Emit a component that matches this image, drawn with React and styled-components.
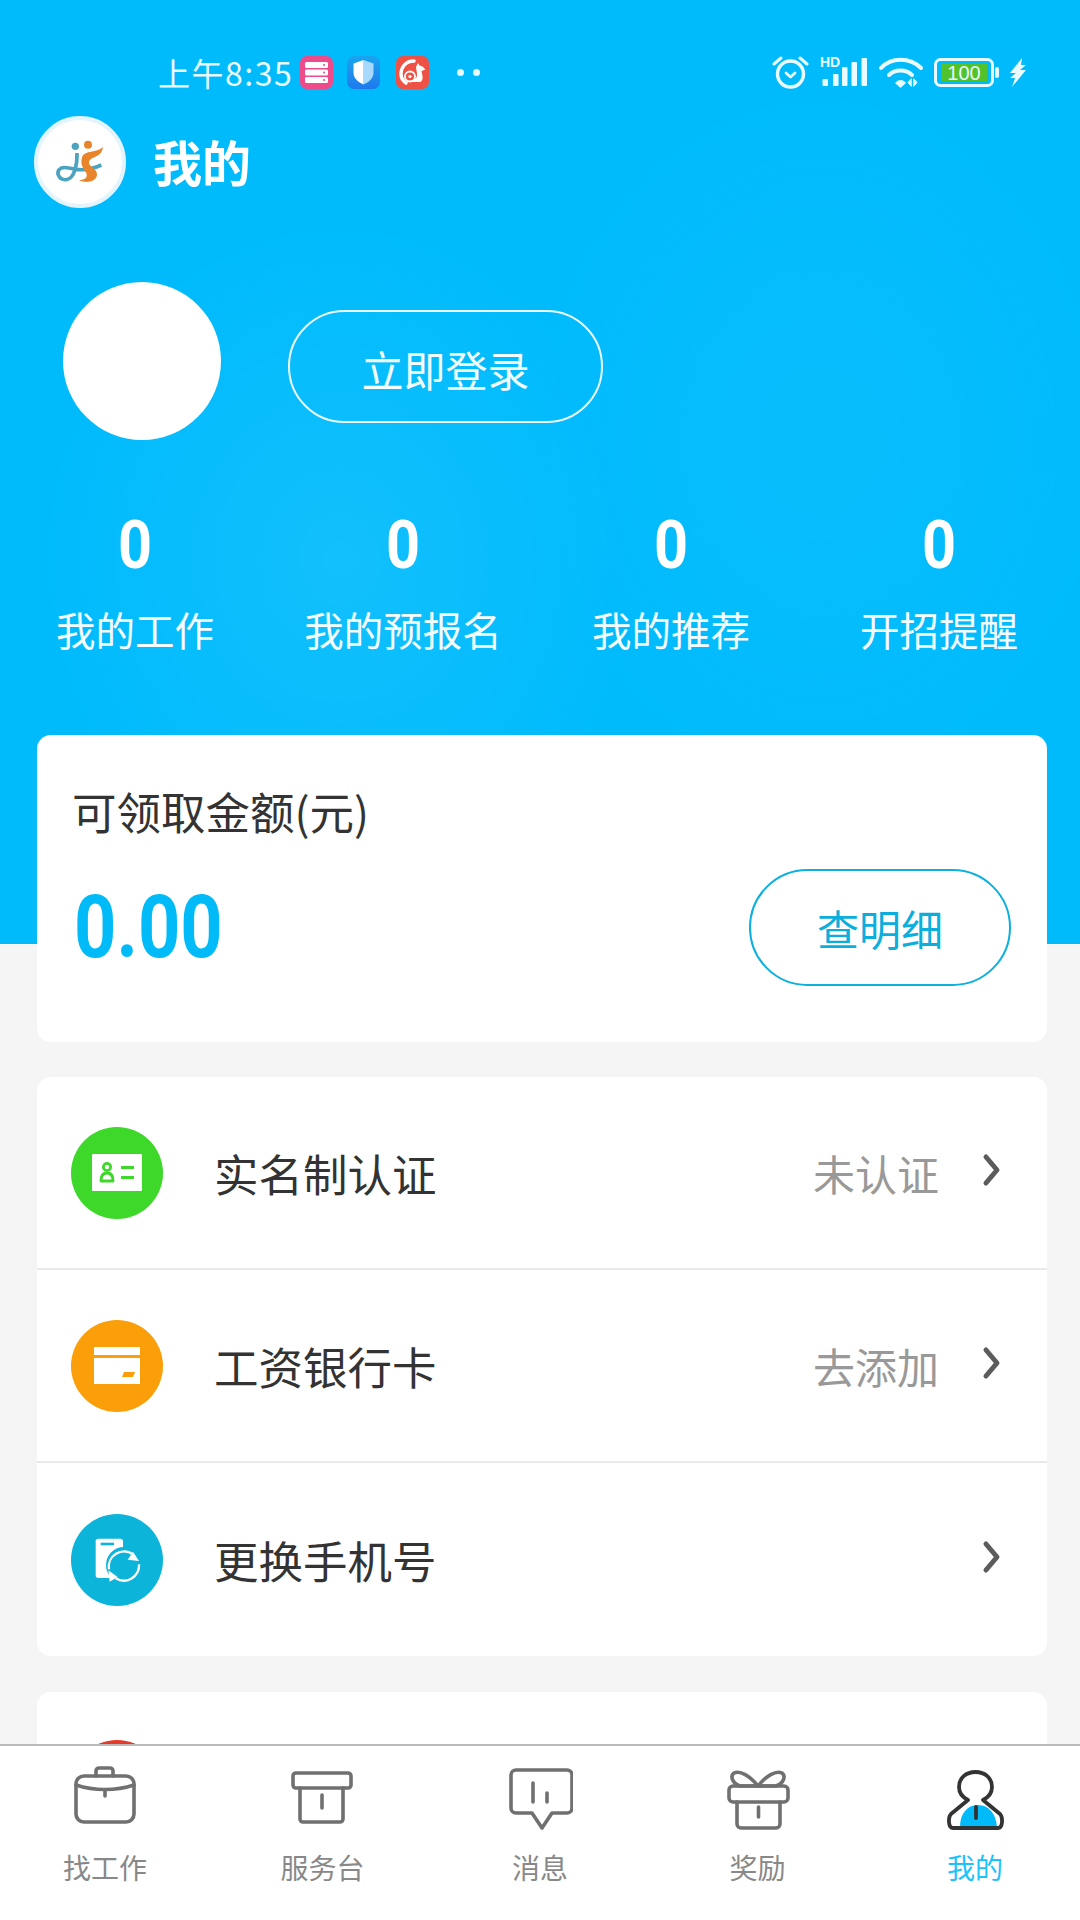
import styled, { createGlobalStyle } from "styled-components";

const BLUE = "#00bbfc";

const GlobalStyle = createGlobalStyle`
  html, body {
    margin: 0;
    padding: 0;
    background: #f5f5f5;
  }
  * {
    box-sizing: border-box;
  }
`;

const Page = styled.div`
  display: flex;
  flex-direction: column;
  width: 1080px;
  height: 1920px;
  overflow: hidden;
  font-family: "Noto Sans CJK SC", "Noto Sans", sans-serif;
`;

const Content = styled.main`
  flex: 1;
  min-height: 0;
  overflow: hidden;
  background:
    radial-gradient(ellipse 300px 340px at 340px 560px, rgba(255, 255, 255, 0.07), transparent) 0 0 / 100% 944px no-repeat,
    radial-gradient(ellipse 300px 360px at 820px 440px, rgba(255, 255, 255, 0.035), transparent) 0 0 / 100% 944px no-repeat,
    linear-gradient(${BLUE}, ${BLUE}) 0 0 / 100% 944px no-repeat,
    #f5f5f5;
`;

const StatusBar = styled.div`
  display: flex;
  align-items: center;
  justify-content: space-between;
  height: 64px;
  margin-top: 40px;
  padding: 0 54px 0 158px;
`;

const StatusLeft = styled.div`
  display: flex;
  align-items: center;
`;

const StatusRight = styled.div`
  display: flex;
  align-items: center;
  gap: 11px;
`;

const Clock = styled.span`
  width: 142px;
  font-size: 32px;
  letter-spacing: 1.5px;
  white-space: nowrap;
  color: #e9fbff;
`;

const AppIcon = styled.span`
  display: flex;
  width: 33px;
  height: 33px;
  margin-right: ${(p) => p.$gap}px;
  border-radius: 7px;
  overflow: hidden;
`;

const Dots = styled.span`
  display: flex;
  gap: 9px;
  margin-left: 1px;
`;

const Dot = styled.i`
  width: 7px;
  height: 7px;
  border-radius: 50%;
  background: #e6fbff;
`;

const TitleBar = styled.header`
  display: flex;
  align-items: center;
  gap: 27px;
  height: 92px;
  margin-top: 12px;
  padding-left: 34px;
`;

const LogoCircle = styled.div`
  display: flex;
  width: 92px;
  height: 92px;
  border-radius: 50%;
  border: 4px solid #e3f4fd;
  background: #fff;
`;

const PageTitle = styled.h1`
  margin: 0 0 4px;
  font-size: 49px;
  font-weight: 700;
  color: #fff;
`;

const Profile = styled.section`
  display: flex;
  align-items: center;
  gap: 67px;
  margin-top: 74px;
  padding-left: 63px;
`;

const Avatar = styled.div`
  width: 158px;
  height: 158px;
  border-radius: 50%;
  background: #fff;
`;

const LoginButton = styled.button`
  width: 315px;
  height: 113px;
  margin-top: 10px;
  padding: 4px 0 0;
  border: 2px solid #ecfbff;
  border-radius: 57px;
  background: transparent;
  font-family: inherit;
  font-size: 42px;
  color: #f2fdff;
`;

const Stats = styled.section`
  display: grid;
  grid-template-columns: repeat(4, 268px);
  margin: 68px 0 0 1px;
`;

const Stat = styled.div`
  display: flex;
  flex-direction: column;
  align-items: center;
  color: #fff;
`;

const StatValue = styled.span`
  font-family: Roboto, sans-serif;
  font-size: 66px;
  line-height: 76px;
  font-weight: 700;
  transform: scaleX(0.9);
`;

const StatLabel = styled.span`
  margin-top: 17px;
  font-size: 39.5px;
  line-height: 56px;
  color: #f4fdff;
`;

const Card = styled.section`
  margin: ${(p) => p.$top}px 33px 0 37px;
  border-radius: 14px;
  background: #fff;
`;

const BalanceCard = styled(Card)`
  display: flex;
  align-items: flex-end;
  justify-content: space-between;
  height: 307px;
  padding: 0 36px 56px 35px;
`;

const BalanceInfo = styled.div`
  display: flex;
  flex-direction: column;
`;

const BalanceLabel = styled.span`
  font-size: 44.5px;
  line-height: 56px;
  color: #333;
`;

const BalanceAmount = styled.span`
  margin: 42px 0 13px 2px;
  font-family: Roboto, sans-serif;
  font-size: 87px;
  line-height: 92px;
  font-weight: 700;
  color: #00bbf8;
  transform: scaleX(0.85);
  transform-origin: left center;
`;

const DetailButton = styled.button`
  width: 262px;
  height: 117px;
  padding: 0;
  border: 2px solid #0cb0dd;
  border-radius: 59px;
  background: #fff;
  font-family: inherit;
  font-size: 42px;
  color: #0caedc;
`;

const Row = styled.div`
  display: flex;
  align-items: center;
  height: 193px;
  padding: 0 44px 0 34px;
  border-bottom: ${(p) => (p.$last ? "none" : "2px solid #eaeaea")};
`;

const RowIcon = styled.span`
  display: flex;
  align-items: center;
  justify-content: center;
  flex-shrink: 0;
  width: 92px;
  height: 92px;
  border-radius: 50%;
  background: ${(p) => p.$color};
`;

const PeekIcon = styled(RowIcon)`
  margin-bottom: 6px;
`;

const RowLabel = styled.span`
  flex: 1;
  margin-left: 51px;
  font-size: 44.5px;
  color: #333;
`;

const RowValue = styled.span`
  margin-right: 42px;
  font-size: 42px;
  color: #999;
`;

const ChevronMark = styled.svg`
  display: block;
  margin-bottom: 5px;
  fill: none;
  stroke: #5c5c5c;
  stroke-width: 5;
  stroke-linecap: round;
  stroke-linejoin: round;
`;

const TabBar = styled.nav`
  display: flex;
  justify-content: space-between;
  flex-shrink: 0;
  height: 176px;
  padding: 20px 62px 0;
  border-top: 2px solid #bbb;
  background: #fff;
`;

const Tab = styled.div`
  display: flex;
  flex-direction: column;
  align-items: center;
  width: 86px;
`;

const TabLabel = styled.span`
  margin-top: 15px;
  font-size: 28px;
  line-height: 40px;
  white-space: nowrap;
  color: ${(p) => (p.$active ? "#1cc3fb" : "#888")};
`;

const TabGlyph = styled.svg`
  display: block;
  width: 66px;
  height: 66px;
  fill: none;
  stroke: ${(p) => p.$stroke || "#707070"};
  stroke-width: ${(p) => p.$weight || 3.6};
  stroke-linejoin: round;
  stroke-linecap: round;
`;

const Logo = () => (
  <svg width="84" height="84" viewBox="55 59 252 252">
    <circle cx="167" cy="138" r="11" fill="#4ca3c0" />
    <circle cx="205" cy="133" r="12" fill="#e8852a" />
    <path d="M172 158C173 190 165 235 140 238 118 240 105 215 125 203 145 193 175 226 245 194" fill="none" stroke="#4ca3c0" strokeWidth="11" />
    <path d="M250 140C245 175 215 165 208 185 204 198 235 205 232 225 228 245 200 250 178 240 195 238 205 232 200 218 190 205 180 190 188 168 196 150 230 158 250 140Z" fill="#e8852a" />
  </svg>
);

const ServerIcon = () => (
  <svg width="33" height="33" viewBox="0 0 33 33">
    <rect width="33" height="33" fill="#ee4b8b" />
    <rect x="5" y="6" width="23" height="6" rx="1.500" fill="#fff" />
    <rect x="5" y="13.500" width="23" height="6" rx="1.500" fill="#fff" />
    <rect x="5" y="21" width="23" height="6" rx="1.500" fill="#fff" />
    <circle cx="24" cy="9" r="1" fill="#ee4b8b" />
    <circle cx="24" cy="16.500" r="1" fill="#ee4b8b" />
    <circle cx="24" cy="24" r="1" fill="#ee4b8b" />
  </svg>
);

const ShieldIcon = () => (
  <svg width="33" height="33" viewBox="0 0 33 33">
    <defs>
      <linearGradient id="shieldBg" x1="0" y1="0" x2="0" y2="1">
        <stop offset="0" stopColor="#19a5f0" />
        <stop offset="1" stopColor="#2079ec" />
      </linearGradient>
    </defs>
    <rect width="33" height="33" fill="url(#shieldBg)" />
    <path d="M16.500 4l10 3.500v9c0 6-4.500 9.500-10 12z" fill="#a6d9fb" />
    <path d="M16.500 4l-10 3.500v9c0 6 4.500 9.500 10 12z" fill="#fff" />
  </svg>
);

const BrowserIcon = () => (
  <svg width="33" height="33" viewBox="0 0 33 33">
    <rect width="33" height="33" fill="#ee5245" />
    <path d="M18 5C10 5 5 11 5 18c0 4 2 7 5 9" fill="none" stroke="#fff" strokeWidth="3.500" strokeLinecap="round" />
    <circle cx="14" cy="20.500" r="5" fill="none" stroke="#fff" strokeWidth="1.800" />
    <circle cx="14" cy="20.500" r="1.600" fill="#fff" />
    <path d="M20 11l2-4 1.500 2.500 3 1 3 3-4 1.500 1 5c.5 3-.5 5-2 6H14v-1.500c4 0 7-2 7-6 0-3-1-5-1-8z" fill="#fff" />
  </svg>
);

const AlarmIcon = () => (
  <svg width="37" height="34" viewBox="0 0 37 34" fill="none" stroke="#e9fbff" strokeLinecap="round" strokeLinejoin="round">
    <circle cx="18.500" cy="19" r="13" strokeWidth="3.400" />
    <path d="M14 18l4.500 4 4.500-4" strokeWidth="2.800" />
    <path d="M2 9l7-6M35 9l-7-6" strokeWidth="3" />
  </svg>
);

const SignalIcon = () => (
  <svg width="48" height="36" viewBox="0 -3 48 36" fill="#e9fbff">
    <text x="0" y="10" fontFamily="Liberation Sans" fontWeight="700" fontSize="14">HD</text>
    <rect x="2.500" y="22" width="5.500" height="7" rx="1" />
    <rect x="13" y="17" width="5.500" height="12" rx="1" />
    <rect x="22" y="10" width="5.500" height="19" rx="1" />
    <rect x="31.500" y="5" width="5.500" height="24" rx="1" />
    <rect x="41.500" y="1" width="5.500" height="28" rx="1" />
  </svg>
);

const WifiIcon = () => (
  <svg width="44" height="31" viewBox="0 0 44 31" fill="none" stroke="#e9fbff" strokeLinecap="round">
    <path d="M2 11C12 0 31 0 42 11" strokeWidth="4" />
    <path d="M10 18c6-6 17-6 23 0" strokeWidth="4" />
    <path d="M17 26c3-3 7-3 9 0l-4.500 4z" fill="#e9fbff" strokeWidth="1.500" strokeLinejoin="round" />
    <path d="M32 22l-3 3.500 3 3.500zM35 22l3 3.500-3 3.500z" fill="#e9fbff" strokeWidth="1" strokeLinejoin="round" />
  </svg>
);

const BatteryIcon = () => (
  <svg width="65" height="29" viewBox="0 0 65 29">
    <rect x="1.500" y="1.500" width="57" height="26" rx="5" fill="none" stroke="#e9fbff" strokeWidth="3" />
    <rect x="7" y="6" width="46" height="17" fill="#52c22c" />
    <rect x="61" y="9" width="4" height="11" rx="2" fill="#e9fbff" />
    <text x="30" y="21.500" textAnchor="middle" fontFamily="Liberation Sans" fontSize="20" fill="#e9fbff">100</text>
  </svg>
);

const BoltIcon = () => (
  <svg width="16" height="29" viewBox="0 0 16 29" fill="#e9fbff">
    <path d="M12 0L0 15h6l-6 5h5L2 29 16 12h-6l6-5h-5z" />
  </svg>
);

const IdCardIcon = () => (
  <svg width="50" height="37" viewBox="0 0 50 37">
    <rect width="50" height="37" rx="1" fill="#fff" />
    <circle cx="15" cy="13" r="3.600" fill="none" stroke="#3ed82a" strokeWidth="2.800" />
    <path d="M9 27c0-5 2-8 6-8s6 3 6 8z" fill="none" stroke="#3ed82a" strokeWidth="2.800" strokeLinejoin="round" />
    <rect x="29" y="12" width="13" height="3" fill="#3ed82a" />
    <rect x="29" y="22" width="13" height="3" fill="#3ed82a" />
  </svg>
);

const BankCardIcon = () => (
  <svg width="46" height="37" viewBox="0 0 46 37">
    <rect width="46" height="8" fill="#fff" />
    <rect y="11" width="46" height="26" fill="#fff" />
    <path d="M30 25h11l-2 5H28z" fill="#fa9f0a" />
  </svg>
);

const PhoneSwapIcon = () => (
  <svg width="47" height="47" viewBox="105 105 141 141">
    <rect x="110" y="113" width="82" height="118" rx="8" fill="#fff" />
    <rect x="125" y="125" width="40" height="8" fill="#0cb4da" />
    <circle cx="195" cy="192" r="54" fill="#0cb4da" />
    <path d="M150 205A46 46 0 0 1 222 160" fill="none" stroke="#fff" strokeWidth="7" />
    <path d="M222 152L240 180 206 176Z" fill="#fff" />
    <path d="M240 190A46 46 0 0 1 170 232" fill="none" stroke="#fff" strokeWidth="7" />
    <path d="M148 208L176 228 152 242Z" fill="#fff" />
  </svg>
);

const Chevron = () => (
  <ChevronMark width="22" height="36" viewBox="0 0 22 36">
    <path d="M5 5l11 13L5 31" />
  </ChevronMark>
);

const BriefcaseTab = () => (
  <TabGlyph viewBox="0 0 66 66">
    <path d="M24 10V5a3 3 0 0 1 3-3h11a3 3 0 0 1 3 3v5" />
    <rect x="4" y="10" width="58" height="46" rx="8" />
    <path d="M4 19c18 6 40 6 58 0" />
    <path d="M33 24v6" />
  </TabGlyph>
);

const BoxTab = () => (
  <TabGlyph viewBox="0 0 66 66">
    <rect x="3" y="7" width="58" height="15" rx="3" />
    <path d="M10 22v31a3 3 0 0 0 3 3h37a3 3 0 0 0 3-3V22" />
    <path d="M32 29v13" />
  </TabGlyph>
);

const MessageTab = () => (
  <TabGlyph viewBox="0 0 66 66">
    <path d="M9 4h51a5 5 0 0 1 5 5v33a5 5 0 0 1-5 5H45l-10 15-10-15H9a5 5 0 0 1-5-5V9a5 5 0 0 1 5-5z" />
    <path d="M26 17v19M40 27v9" />
  </TabGlyph>
);

const GiftTab = () => (
  <TabGlyph viewBox="0 0 66 66">
    <path d="M33 20C25 10 15 4 9 7c-4 3-2 10 6 13zM33 20c8-10 18-16 24-13 4 3 2 10-6 13z" />
    <rect x="4" y="20" width="59" height="16" rx="4" />
    <path d="M12 36v22a4 4 0 0 0 4 4h35a4 4 0 0 0 4-4V36" />
    <path d="M33.500 41v10" />
  </TabGlyph>
);

const UserTab = () => (
  <TabGlyph viewBox="0 0 66 66" $stroke="#333" $weight={3.8}>
    <path d="M18 61c0-13 7-22 18-22s18 9 19 22z" fill="#00baf9" stroke="none" />
    <path d="M26 34c-6-3-9-8-9-13C17 12 24 6 33.500 6S50 12 50 21c0 5-3 10-9 13l17 14c3 3 3 14-2 14H11c-5 0-5-11-2-14z" />
    <path d="M34 41v11" />
  </TabGlyph>
);

const rows = [
  { label: "实名制认证", value: "未认证", color: "#3ed82a", Icon: IdCardIcon },
  { label: "工资银行卡", value: "去添加", color: "#fa9f0a", Icon: BankCardIcon },
  { label: "更换手机号", color: "#0cb4da", Icon: PhoneSwapIcon },
];

const stats = ["我的工作", "我的预报名", "我的推荐", "开招提醒"];

const tabs = [
  { label: "找工作", Icon: BriefcaseTab },
  { label: "服务台", Icon: BoxTab },
  { label: "消息", Icon: MessageTab },
  { label: "奖励", Icon: GiftTab },
  { label: "我的", Icon: UserTab, active: true },
];

const App = () => {
  return (
    <Page>
      <GlobalStyle />
      <Content>
        <StatusBar>
          <StatusLeft>
            <Clock>上午8:35</Clock>
            <AppIcon $gap={14}><ServerIcon /></AppIcon>
            <AppIcon $gap={16}><ShieldIcon /></AppIcon>
            <AppIcon $gap={27}><BrowserIcon /></AppIcon>
            <Dots><Dot /><Dot /></Dots>
          </StatusLeft>
          <StatusRight>
            <AlarmIcon />
            <SignalIcon />
            <WifiIcon />
            <BatteryIcon />
            <BoltIcon />
          </StatusRight>
        </StatusBar>

        <TitleBar>
          <LogoCircle><Logo /></LogoCircle>
          <PageTitle>我的</PageTitle>
        </TitleBar>

        <Profile>
          <Avatar />
          <LoginButton>立即登录</LoginButton>
        </Profile>

        <Stats>
          {stats.map((label) => (
            <Stat key={label}>
              <StatValue>0</StatValue>
              <StatLabel>{label}</StatLabel>
            </Stat>
          ))}
        </Stats>

        <BalanceCard $top={78}>
          <BalanceInfo>
            <BalanceLabel>可领取金额(元)</BalanceLabel>
            <BalanceAmount>0.00</BalanceAmount>
          </BalanceInfo>
          <DetailButton>查明细</DetailButton>
        </BalanceCard>

        <Card $top={35}>
          {rows.map(({ label, value, color, Icon }, index) => (
            <Row key={label} $last={index === rows.length - 1}>
              <RowIcon $color={color}><Icon /></RowIcon>
              <RowLabel>{label}</RowLabel>
              {value && <RowValue>{value}</RowValue>}
              <Chevron />
            </Row>
          ))}
        </Card>

        <Card $top={36}>
          <Row $last>
            <PeekIcon $color="#e5392b" />
          </Row>
        </Card>
      </Content>

      <TabBar>
        {tabs.map(({ label, Icon, active }) => (
          <Tab key={label}>
            <Icon />
            <TabLabel $active={active}>{label}</TabLabel>
          </Tab>
        ))}
      </TabBar>
    </Page>
  );
};

export default App;
